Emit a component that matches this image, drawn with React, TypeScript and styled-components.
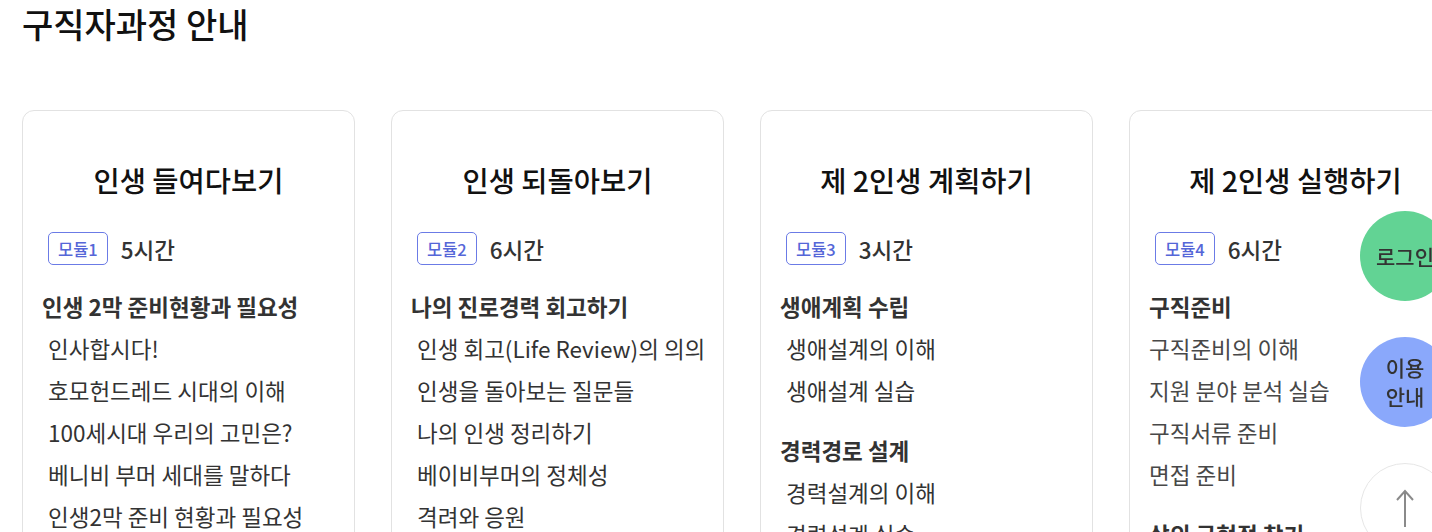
import React from 'react';
import styled, { createGlobalStyle } from 'styled-components';

interface CourseGroup {
  heading: string;
  items: string[];
}

interface Course {
  title: string;
  module: string;
  hours: string;
  indent: boolean;
  groups: CourseGroup[];
}

const courses: Course[] = [
  {
    title: '인생 들여다보기',
    module: '모듈1',
    hours: '5시간',
    indent: true,
    groups: [
      {
        heading: '인생 2막 준비현황과 필요성',
        items: [
          '인사합시다!',
          '호모헌드레드 시대의 이해',
          '100세시대 우리의 고민은?',
          '베니비 부머 세대를 말하다',
          '인생2막 준비 현황과 필요성',
        ],
      },
    ],
  },
  {
    title: '인생 되돌아보기',
    module: '모듈2',
    hours: '6시간',
    indent: true,
    groups: [
      {
        heading: '나의 진로경력 회고하기',
        items: [
          '인생 회고(Life Review)의 의의',
          '인생을 돌아보는 질문들',
          '나의 인생 정리하기',
          '베이비부머의 정체성',
          '격려와 응원',
        ],
      },
    ],
  },
  {
    title: '제 2인생 계획하기',
    module: '모듈3',
    hours: '3시간',
    indent: true,
    groups: [
      { heading: '생애계획 수립', items: ['생애설계의 이해', '생애설계 실습'] },
      { heading: '경력경로 설계', items: ['경력설계의 이해', '경력설계 실습'] },
    ],
  },
  {
    title: '제 2인생 실행하기',
    module: '모듈4',
    hours: '6시간',
    indent: false,
    groups: [
      {
        heading: '구직준비',
        items: ['구직준비의 이해', '지원 분야 분석 실습', '구직서류 준비', '면접 준비'],
      },
      { heading: '삶의 균형점 찾기', items: ['일과 삶의 균형', '마무리'] },
    ],
  },
];

const GlobalStyle = createGlobalStyle`
  html, body {
    margin: 0;
    padding: 0;
    background: #fff;
    overflow: hidden;
  }
  body {
    font-family: "Noto Sans CJK KR", "Noto Sans", sans-serif;
    color: #222;
  }
`;

const Page = styled.main`
  width: 1432px;
  height: 532px;
  overflow: hidden;
  padding: 2px 0 0 22px;
  box-sizing: border-box;
`;

const PageTitle = styled.h1`
  margin: 0 0 65px;
  font-size: 34px;
  line-height: 43px;
  font-weight: 500;
  color: #111;
`;

const CardRow = styled.div`
  display: flex;
  gap: 36px;
`;

const Card = styled.section`
  flex: 0 0 auto;
  width: 333px;
  min-width: 0;
  box-sizing: border-box;
  border: 1px solid #e2e2e2;
  border-radius: 12px;
  padding: 51px 19px 40px;
  height: 600px;
`;

const CardTitle = styled.h2`
  margin: 0 0 34px;
  text-align: center;
  font-size: 28.5px;
  line-height: 36px;
  font-weight: 500;
  color: #111;
  white-space: nowrap;
`;

const MetaRow = styled.div`
  display: flex;
  align-items: center;
  gap: 13px;
  margin: 0 0 20px 6px;
`;

const ModuleBadge = styled.span`
  box-sizing: border-box;
  height: 33px;
  padding: 0 9px;
  display: inline-flex;
  align-items: center;
  border: 1px solid #6b7be6;
  border-radius: 5px;
  font-size: 16.5px;
  font-weight: 500;
  color: #5566d8;
`;

const Hours = styled.span`
  font-size: 22.5px;
  font-weight: 500;
  color: #333;
`;

const Group = styled.div`
  & + & {
    margin-top: 18px;
  }
`;

const GroupHeading = styled.h3`
  margin: 0;
  font-size: 22.5px;
  line-height: 42px;
  font-weight: 600;
  color: #333;
  white-space: nowrap;
`;

const ItemList = styled.ul`
  list-style: none;
  margin: 0;
  padding: 0;
`;

const Item = styled.li<{ $indent: boolean }>`
  padding-left: ${(p) => (p.$indent ? '6px' : '0')};
  font-size: 22.5px;
  line-height: 42px;
  font-weight: 400;
  color: ${(p) => (p.$indent ? '#333' : '#484848')};
  white-space: nowrap;
`;

const FloatingNav = styled.nav`
  position: fixed;
  top: 211px;
  right: -18px;
  display: flex;
  flex-direction: column;
  gap: 36px;
`;

const RoundButton = styled.button<{ $bg: string }>`
  width: 90px;
  height: 90px;
  border-radius: 50%;
  border: ${(p) => (p.$bg === '#fff' ? '1px solid #e6e6e6' : 'none')};
  background: ${(p) => p.$bg};
  display: flex;
  align-items: center;
  justify-content: center;
  padding: 0;
  font-family: inherit;
  font-size: 21px;
  line-height: 29px;
  font-weight: 500;
  color: #333;
  text-align: center;
  white-space: nowrap;
  cursor: pointer;
`;

function UpArrow() {
  return (
    <svg width="20" height="40" viewBox="0 0 20 40" fill="none" stroke="#8a8a8a" strokeWidth="2">
      <path d="M10 3 V39" />
      <path d="M2 12 L10 3 L18 12" />
    </svg>
  );
}

export default function App() {
  return (
    <>
      <GlobalStyle />
      <Page>
        <PageTitle>구직자과정 안내</PageTitle>
        <CardRow>
          {courses.map((course) => (
            <Card key={course.module}>
              <CardTitle>{course.title}</CardTitle>
              <MetaRow>
                <ModuleBadge>{course.module}</ModuleBadge>
                <Hours>{course.hours}</Hours>
              </MetaRow>
              {course.groups.map((group) => (
                <Group key={group.heading}>
                  <GroupHeading>{group.heading}</GroupHeading>
                  <ItemList>
                    {group.items.map((item) => (
                      <Item key={item} $indent={course.indent}>
                        {item}
                      </Item>
                    ))}
                  </ItemList>
                </Group>
              ))}
            </Card>
          ))}
        </CardRow>
      </Page>
      <FloatingNav>
        <RoundButton $bg="#62d394">로그인</RoundButton>
        <RoundButton $bg="#8aa8fb">
          이용
          <br />
          안내
        </RoundButton>
        <RoundButton $bg="#fff" aria-label="맨 위로">
          <UpArrow />
        </RoundButton>
      </FloatingNav>
    </>
  );
}
